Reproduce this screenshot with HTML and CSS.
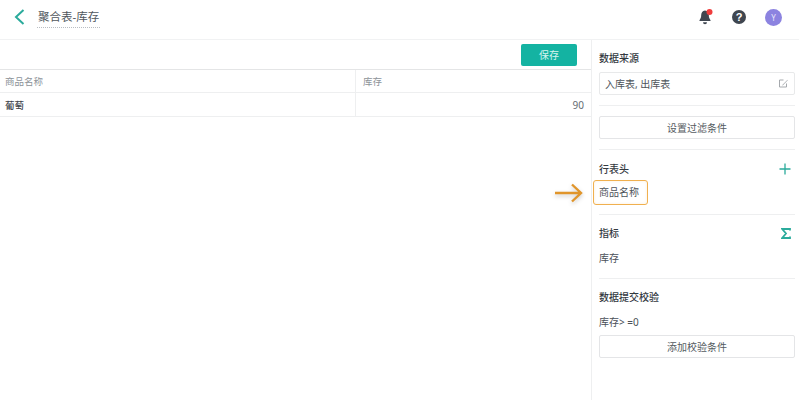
FILE: index.html
```html
<!DOCTYPE html>
<html lang="zh">
<head>
<meta charset="utf-8">
<title>聚合表-库存</title>
<link rel="stylesheet" href="styles.css">
</head>
<body>
<div class="page">
  <header class="topbar">
    <div class="top-left">
      <svg class="back" width="11" height="16" viewBox="0 0 11 16"><path d="M9.500 1 2 8l7.500 7" fill="none" stroke="#2bab9c" stroke-width="2"/></svg>
      <span class="title">聚合表-库存</span>
    </div>
    <div class="top-right">
      <svg class="bell" width="16" height="16" viewBox="0 0 16 16"><path d="M7 1.500c-2.600.4-3.700 2.300-3.800 4.600 0 2.400-.7 3.800-1.700 5.100v.8h11v-.8c-1-1.300-1.700-2.700-1.700-5.100C10.700 3.800 9.600 1.900 7 1.500z" fill="#3f4650"/><path d="M5 13.200h4a2 2 0 0 1-4 0z" fill="#3f4650"/><circle cx="11.500" cy="3" r="3" fill="#ef3d3d"/></svg>
      <svg class="help" width="14" height="14" viewBox="0 0 14 14"><circle cx="7" cy="7" r="7" fill="#3f4650"/><text x="7" y="10.800" text-anchor="middle" class="help-mark">?</text></svg>
      <span class="avatar">Y</span>
    </div>
  </header>
  <div class="body">
    <main class="content">
      <div class="toolbar"><button class="save">保存</button></div>
      <div class="table">
        <div class="row head"><div class="cell c1">商品名称</div><div class="cell c2">库存</div></div>
        <div class="row"><div class="cell c1 strong">葡萄</div><div class="cell c2 num">90</div></div>
      </div>
    </main>
    <aside class="side">
      <section class="sec s1">
        <h3>数据来源</h3>
        <div class="input"><span>入库表, 出库表</span>
          <svg width="9" height="9" viewBox="0 0 9 9"><path d="M7.500 4.500v3.500h-7v-7h4" fill="none" stroke="#a5a9ad"/><path d="M8.500.8 3.500 5.800 3 6.500l1-.3 4.800-4.900z" fill="#a5a9ad"/></svg>
        </div>
      </section>
      <section class="sec s2"><button class="btn">设置过滤条件</button></section>
      <section class="sec s3">
        <div class="sec-head"><h3>行表头</h3>
          <svg width="12" height="12" viewBox="0 0 12 12"><path d="M6 .5v11M.5 6h11" stroke="#2bab9c" stroke-width="1.300"/></svg>
        </div>
        <div class="item-slot"><span class="item">商品名称</span>
          <span class="highlight"></span>
          <svg class="arrow" width="30" height="22" viewBox="0 0 30 22"><path d="M1 11h26M18 2.500l9 8.500-9 8.500" fill="none" stroke="#e0952b" stroke-width="2.400"/></svg>
        </div>
      </section>
      <section class="sec s4">
        <div class="sec-head"><h3>指标</h3>
          <svg width="10" height="11" viewBox="0 0 10 11"><path d="M9 2.500V1H1.200L5 5.500 1.200 10H9V8.500" fill="none" stroke="#2bab9c" stroke-width="1.800"/></svg>
        </div>
        <div class="item-plain">库存</div>
      </section>
      <section class="sec s5">
        <h3>数据提交校验</h3>
        <div class="rule">库存&gt; =0</div>
        <button class="btn">添加校验条件</button>
      </section>
    </aside>
  </div>
</div>
</body>
</html>
```
FILE: styles.css
```css
* { box-sizing: border-box; }
html, body { margin: 0; height: 100%; background: #fff; }
body { font-family: "Noto Sans", "Noto Sans CJK SC", sans-serif; font-size: 10px; color: #4a5058; overflow: hidden; }
.page { width: 799px; height: 400px; display: flex; flex-direction: column; }
.topbar { height: 40px; flex: none; display: flex; justify-content: space-between; align-items: center; border-bottom: 1px solid #f1f2f3; padding: 0 17px 5px 14px; }
.top-left { display: flex; align-items: center; gap: 12px; }
.back { display: block; }
.title { font-size: 11.500px; color: #51575e; padding: 1px; border-bottom: 1px dotted #b9bdc2; line-height: 18px; }
.top-right { display: flex; align-items: center; gap: 0; }
.bell { margin-right: 18px; }
.help { margin-right: 19px; }
.help-mark { font: bold 11px "Liberation Sans", sans-serif; fill: #fff; }
.avatar { width: 17px; height: 17px; border-radius: 50%; background: #8c83e0; color: #e8e6fa; font-size: 8px; display: flex; align-items: center; justify-content: center; }
.body { flex: 1; display: flex; min-height: 0; }
.content { flex: 1; min-width: 0; }
.toolbar { height: 29px; display: flex; justify-content: flex-end; padding: 4px 14px 0 0; }
.save { width: 56px; height: 22px; border: 0; border-radius: 2px; background: #14b3a2; color: #d5f3ef; font: inherit; font-size: 10px; padding: 0 0 2px; }
.table { border-top: 1px solid #e4e5e6; }
.row { display: flex; height: 24px; border-bottom: 1px solid #eeeff0; }
.head { height: 23px; }
.cell { padding: 0 7px 0 5px; display: flex; align-items: center; }
.c1 { width: 356px; border-right: 1px solid #eeeff0; }
.c2 { flex: 1; padding-left: 7px; }
.head .cell { color: #8d9399; font-size: 9.500px; }
.strong { color: #3e444b; font-weight: 500; font-size: 9.500px; }
.num { justify-content: flex-end; color: #666c72; font-size: 10px; }
.side { width: 208px; flex: none; border-left: 1px solid #eeeff0; padding: 0 4px 0 7px; }
.sec { border-bottom: 1px solid #eeeff0; }
.sec:last-child { border-bottom: 0; }
h3 { margin: 0; font-size: 10px; font-weight: 500; line-height: 16px; color: #33393f; }
.s1 { height: 66px; padding-top: 10px; }
.input { margin-top: 6px; height: 23px; border: 1px solid #e8e9ea; border-radius: 2px; display: flex; align-items: center; justify-content: space-between; padding: 0 6px 0 5px; color: #4d5359; }
.s2 { height: 44px; padding-top: 10px; }
.btn { display: block; width: 100%; height: 23px; border: 1px solid #e4e5e7; border-radius: 2px; background: #fff; color: #555b61; font: inherit; padding: 0 0 1px; }
.s3 { height: 65px; padding-top: 11px; }
.sec-head { display: flex; justify-content: space-between; align-items: center; padding-right: 4px; }
.item-slot { position: relative; margin-top: 3px; line-height: 25px; height: 25px; color: #4d5359; }
.highlight { position: absolute; left: -6px; top: 0; width: 55px; height: 25px; border: 1px solid #f0b04f; border-radius: 3px; box-shadow: inset 0 0 3px rgba(240,176,79,.2); }
.arrow { position: absolute; left: -45px; top: 2px; filter: drop-shadow(0 2px 2px rgba(0,0,0,.2)); }
.s4 { height: 64px; padding-top: 10px; }
.item-plain { margin-top: 9px; line-height: 16px; }
.s5 { padding-top: 10px; }
.rule { margin-top: 9px; line-height: 16px; margin-bottom: 5px; }
```
